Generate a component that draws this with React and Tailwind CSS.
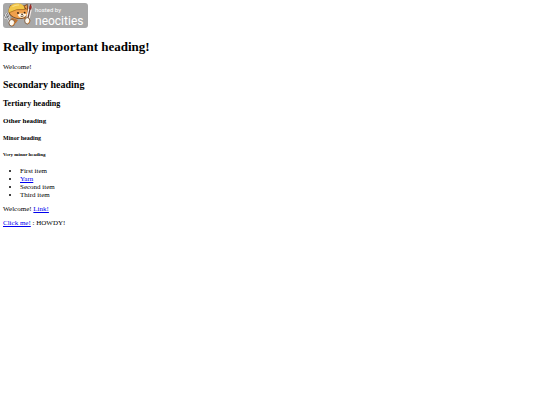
const items = [
  { text: "First item" },
  { text: "Yarn", href: "#yarn" },
  { text: "Second item" },
  { text: "Third item" },
];

function Link({ href, children }) {
  return (
    <a href={href} className="text-[#0000ee] underline">
      {children}
    </a>
  );
}

function CatLogo() {
  return (
    <svg viewBox="0 0 31 27" className="w-[31px] h-[27px] shrink-0" aria-hidden="true">
      {/* ears and head */}
      <path d="M4.5 8 L6 3.5 L11 2 L20 3.5 L23.6 1.8 L24.2 8 L23.6 14 Q20 17.6 14 17 Q7 16 4.5 11Z" fill="#7a4a22" />
      <path d="M5.5 10 Q13 6 23.4 7.5 L23.2 13 Q20 16.6 14.5 16.3 Q8 15.3 5.6 11Z" fill="#f0a04c" />
      <path d="M20.5 4.5 L22.8 3 L23.2 7.5Z" fill="#f0a04c" />
      <path d="M14 12.5 Q18 10 22.5 12.5 Q21 15.6 17 15.8 Q14 15 14 12.5Z" fill="#fff6e6" />
      {/* hard hat */}
      <path d="M4.5 9.8 Q4.8 2.6 11 1.4 Q17 .6 20 4.5 L20.7 7 Q12 6.4 4.8 10.8Z" fill="#f2c648" />
      <path d="M5 10.8 Q12 6.4 21 7.4" stroke="#a46b18" strokeWidth=".7" fill="none" />
      <path d="M8.5 4.6 Q11.5 2.6 15 3" stroke="#f9e08a" strokeWidth="1.1" fill="none" />
      {/* face */}
      <circle cx="14" cy="11" r=".9" fill="#332017" />
      <circle cx="20.6" cy="10.6" r=".9" fill="#332017" />
      <path d="M17.2 12 L19 12 L18.1 13Z M16.5 14 Q18 15.2 19.8 13.8" stroke="#4a2c14" strokeWidth=".5" fill="#4a2c14" />
      {/* fork */}
      <path d="M0 12 L1.4 15.5 L4.6 14.5 L3.4 10.8 M1.7 11.4 L6.5 21" stroke="#f4f4f4" strokeWidth="2" fill="none" />
      <path d="M0 12 L1.4 15.5 L4.6 14.5 L3.4 10.8 M1.7 11.4 L6.5 21" stroke="#555" strokeWidth=".8" fill="none" />
      {/* brush */}
      <path d="M23.6 17.5 L26.6 4.5" stroke="#f8eee9" strokeWidth="3.6" strokeLinecap="round" />
      <path d="M23.6 18 L26 7" stroke="#67443a" strokeWidth="1.2" />
      <path d="M25.1 6.8 Q24.6 4.2 26.8 2.2 Q28 5 27.1 7.4Z" fill="#ad2825" stroke="#552020" strokeWidth=".5" />
      {/* arms and paws */}
      <path d="M7.5 15.5 L14 18 L11.5 21.5 L7 18Z M19 16 L23 15.5 L22 18.5Z" fill="#c5742d" />
      <ellipse cx="7.8" cy="20.8" rx="2.9" ry="3.3" fill="#fffaf0" stroke="#6a4528" strokeWidth=".8" />
      <ellipse cx="23.3" cy="18.8" rx="2.6" ry="3.2" fill="#fffaf0" stroke="#6a4528" strokeWidth=".8" />
      <path d="M8 23.8 Q10.7 23 10.5 20 M23.5 21.7 Q26 21 25.8 18.2" stroke="#e58b36" strokeWidth=".8" fill="none" />
    </svg>
  );
}

function HostBadge() {
  return (
    <a
      href="#neocities"
      className="flex w-[85px] h-[25px] items-center rounded-[3px] bg-[#a8a8a8] pl-px font-[Roboto,sans-serif] text-white"
    >
      <CatLogo />
      <span className="flex flex-col">
        <span className="text-[6px] leading-[10px]">hosted by</span>
        <span className="text-[12px] leading-[12px]">neocities</span>
      </span>
    </a>
  );
}

export default function App() {
  return (
    <main className="bg-white p-[3px] font-['Liberation_Serif',serif] text-[7px] leading-[8px] text-black">
      <HostBadge />
      <h1 className="mt-[11px] text-[13px] leading-[16px] font-bold">Really important heading!</h1>
      <p className="mt-2">Welcome!</p>
      <h2 className="mt-2 text-[10px] leading-[12px] font-bold">Secondary heading</h2>
      <h3 className="mt-2 text-[8px] leading-[10px] font-bold">Tertiary heading</h3>
      <h4 className="mt-2 font-bold">Other heading</h4>
      <h5 className="mt-[10px] text-[6px] leading-[6px] font-bold">Minor heading</h5>
      <h6 className="mt-[11px] text-[5px] leading-[6px] font-bold">Very minor heading</h6>
      <ul className="mt-[9px] list-disc pl-[17px]">
        {items.map((item) => (
          <li key={item.text}>
            {item.href ? <Link href={item.href}>{item.text}</Link> : item.text}
          </li>
        ))}
      </ul>
      <p className="mt-[6px]">
        Welcome! <Link href="#link">Link!</Link>
      </p>
      <p className="mt-[6px]">
        <Link href="#click">Click me!</Link> : HOWDY!
      </p>
    </main>
  );
}
